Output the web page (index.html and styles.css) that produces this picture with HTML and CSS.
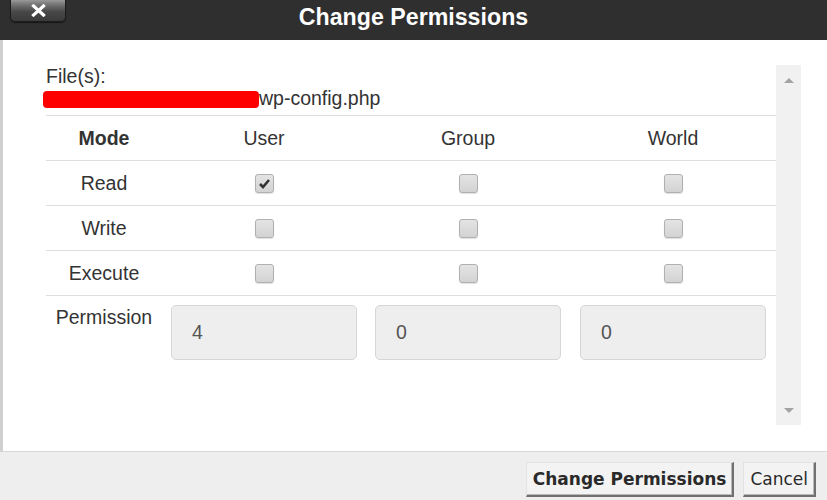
FILE: index.html
```html
<!DOCTYPE html>
<html>
<head>
<meta charset="utf-8">
<link rel="stylesheet" href="styles.css">
</head>
<body>
<div class="dialog">
  <div class="titlebar">
    <button class="close" aria-label="Close">
      <svg width="15" height="13" viewBox="0 0 15 13"><path d="M2.5 2 L12.5 11 M12.5 2 L2.5 11" stroke="#fff" stroke-width="3.2" stroke-linecap="square" fill="none"/></svg>
    </button>
    <div class="title">Change Permissions</div>
    <span></span>
  </div>
  <div class="body">
    <div class="content">
      <div class="files">
        <div class="line">File(s):</div>
        <div class="line"><span class="redact"></span>wp-config.php</div>
      </div>
      <div class="row head">
        <div class="mode">Mode</div><div>User</div><div>Group</div><div>World</div>
      </div>
      <div class="row">
        <div>Read</div>
        <div><span class="cb checked"><svg width="13" height="11" viewBox="0 0 13 11"><path d="M2 6 L5 9 L11 2" stroke="#333" stroke-width="2.6" fill="none"/></svg></span></div>
        <div><span class="cb"></span></div>
        <div><span class="cb"></span></div>
      </div>
      <div class="row">
        <div>Write</div>
        <div><span class="cb"></span></div>
        <div><span class="cb"></span></div>
        <div><span class="cb"></span></div>
      </div>
      <div class="row">
        <div>Execute</div>
        <div><span class="cb"></span></div>
        <div><span class="cb"></span></div>
        <div><span class="cb"></span></div>
      </div>
      <div class="permrow">
        <div class="plabel">Permission</div>
        <div class="pbox">4</div>
        <div class="pbox">0</div>
        <div class="pbox">0</div>
      </div>
    </div>
    <div class="scrollbar">
      <span class="arrow up"></span>
      <span class="arrow down"></span>
    </div>
  </div>
  <div class="footer">
    <button class="btn strong">Change Permissions</button>
    <button class="btn">Cancel</button>
  </div>
</div>
</body>
</html>
```

FILE: styles.css
```css
html, body {
  margin: 0;
  padding: 0;
  background: #fff;
}
.dialog {
  width: 827px;
  height: 500px;
  display: flex;
  flex-direction: column;
  font-family: "Liberation Sans", Arial, sans-serif;
  color: #333;
  overflow: hidden;
}
.titlebar {
  height: 40px;
  flex: none;
  background: #2f2f2f;
  display: grid;
  grid-template-columns: 1fr auto 1fr;
  box-sizing: border-box;
}
.close {
  justify-self: start;
  align-self: start;
  margin: -2px 0 0 10px;
  width: 56px;
  height: 24px;
  padding: 0;
  border: 1px solid #1c1c1c;
  border-top: none;
  border-radius: 0 0 5px 5px;
  background: linear-gradient(#aaaaaa 0%, #7a7a7a 25%, #474747 60%, #3b3b3b 100%);
  box-shadow: 0 1px 1px rgba(0,0,0,0.5);
  display: flex;
  align-items: center;
  justify-content: center;
}
.close svg { display: block; margin-top: 1px; }
.title {
  color: #fff;
  font-weight: bold;
  font-size: 23.2px;
  line-height: 34px;
}
.body {
  height: 411px;
  flex: none;
  box-sizing: border-box;
  border-left: 3px solid #cfcfcf;
  padding: 25px 26px 0 43px;
  display: flex;
}
.content {
  width: 730px;
  font-size: 19.5px;
}
.files {
  border-bottom: 1px solid #dedede;
  padding-bottom: 6px;
}
.line {
  line-height: 22px;
  height: 22px;
  white-space: nowrap;
}
.redact {
  display: inline-block;
  width: 216px;
  height: 17px;
  margin-left: -3px;
  background: #ff0000;
  border-radius: 4px;
  vertical-align: -3px;
}
.row {
  display: grid;
  grid-template-columns: 116px 204px 204px 206px;
  height: 45px;
  box-sizing: border-box;
  border-bottom: 1px solid #dedede;
  align-items: center;
  justify-items: center;
  line-height: 22px;
}
.row.head .mode { font-weight: bold; }
.cb {
  width: 17px;
  height: 17px;
  border: 1px solid #b0b0b0;
  border-radius: 3px;
  background: linear-gradient(#e4e4e4, #d3d3d3);
  box-shadow: 0 1px 1px rgba(0,0,0,0.12);
  display: flex;
  align-items: center;
  justify-content: center;
}
.permrow {
  display: grid;
  grid-template-columns: 116px 204px 204px 206px;
  padding-top: 9px;
  align-items: start;
  justify-items: center;
  line-height: 22px;
}
.plabel {
  padding-top: 1px;
}
.pbox {
  width: 186px;
  height: 55px;
  box-sizing: border-box;
  border: 1px solid #d6d6d6;
  border-radius: 5px;
  background: #eeeeee;
  padding-left: 20px;
  line-height: 53px;
  color: #555;
  justify-self: center;
}
.scrollbar {
  width: 25px;
  height: 360px;
  background: #f1f1f1;
  display: flex;
  flex-direction: column;
  justify-content: space-between;
  align-items: center;
  padding: 13px 0 12px;
  box-sizing: border-box;
}
.arrow {
  width: 0;
  height: 0;
  border-left: 5px solid transparent;
  border-right: 5px solid transparent;
}
.arrow.up { border-bottom: 5px solid #a3a3a3; }
.arrow.down { border-top: 5px solid #a3a3a3; }
.footer {
  flex: 1;
  background: #eeeeee;
  border-top: 1px solid #d8d8d8;
  display: flex;
  justify-content: flex-end;
  align-items: flex-start;
  gap: 9px;
  padding: 10px 11px 0 0;
}
.btn {
  font-family: "DejaVu Sans", Tahoma, Verdana, sans-serif;
  font-size: 17px;
  color: #2a2a2a;
  height: 35px;
  padding: 0 6px;
  background: #f3f3f3;
  border-style: solid;
  border-width: 1px 2px 2px 1px;
  border-color: #e2e2e2 #707070 #707070 #e2e2e2;
  box-shadow: inset -1px -1px 0 #b8b8b8;
  border-radius: 0;
}
.btn.strong { font-weight: bold; }
```
